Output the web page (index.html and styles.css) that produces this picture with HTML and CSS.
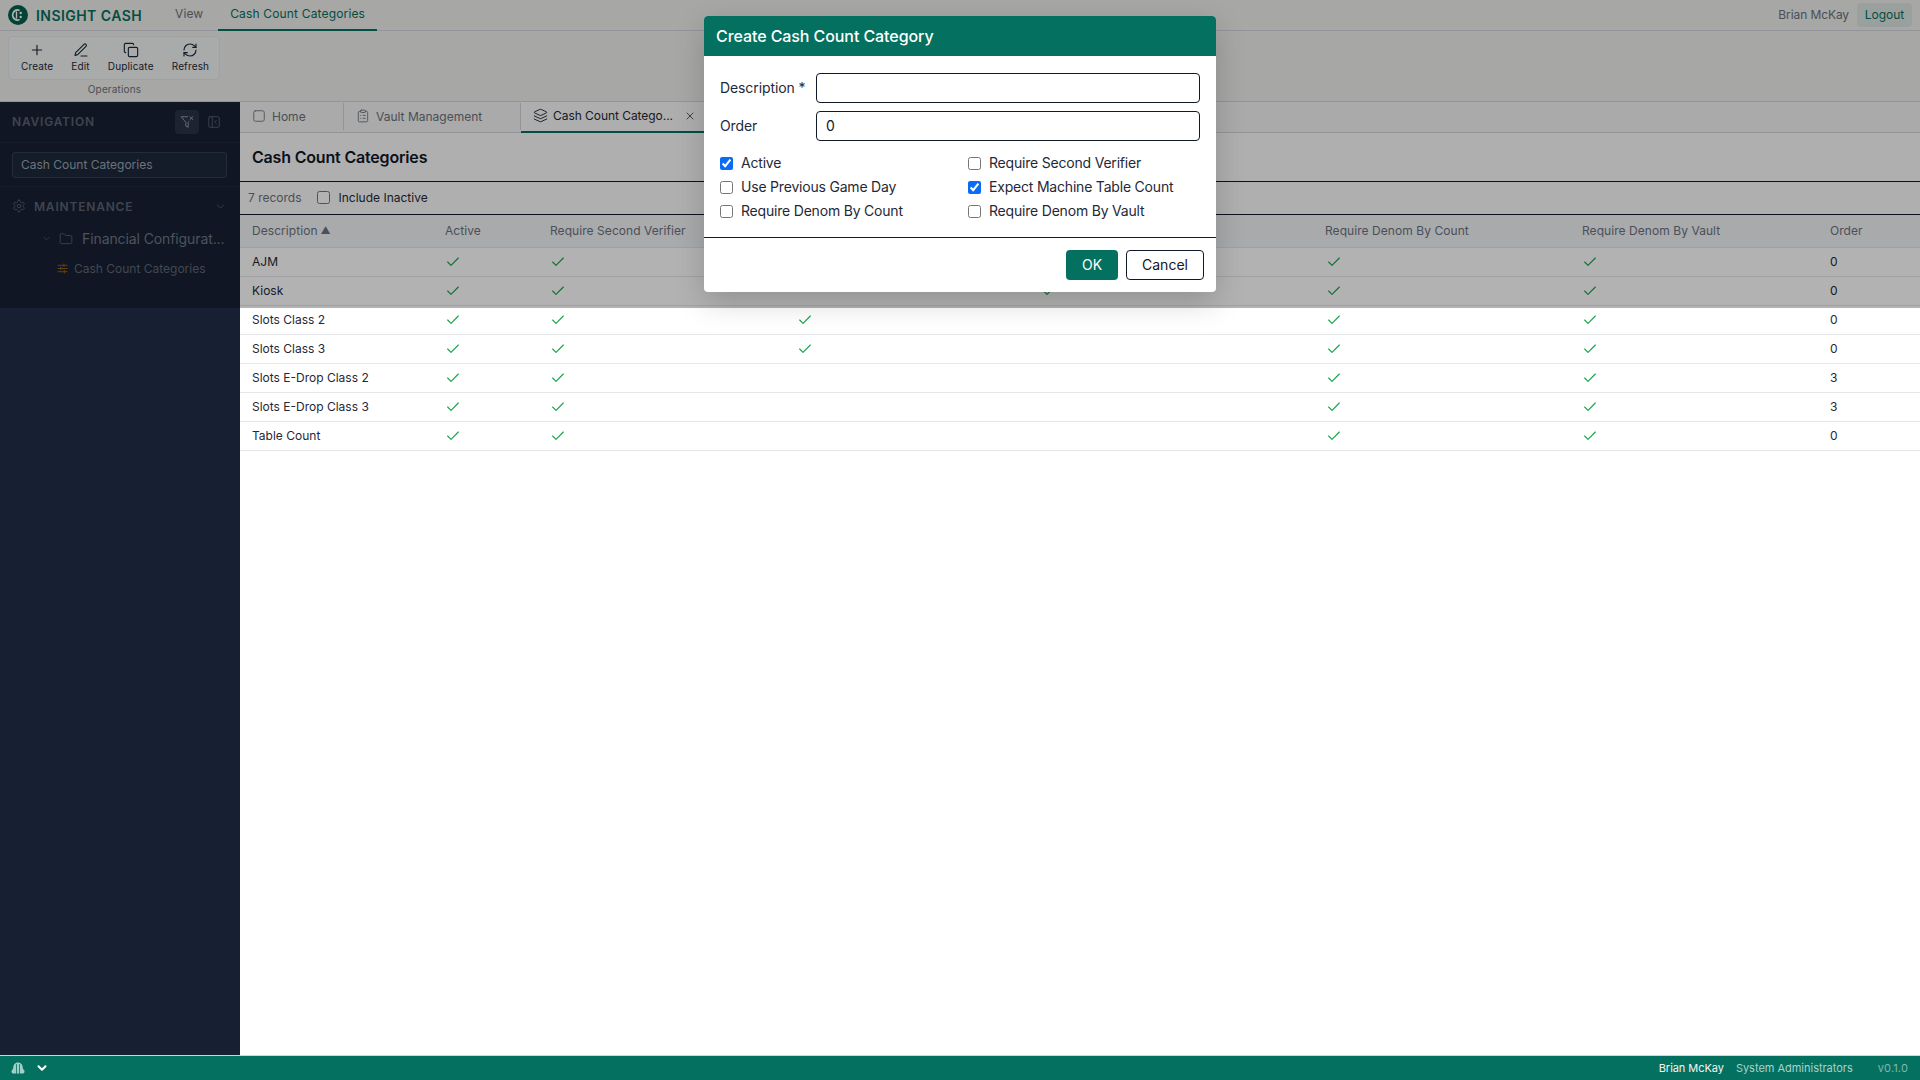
FILE: index.html
```html
<!DOCTYPE html>
<html lang="en">
<head>
<meta charset="utf-8">
<title>Insight Cash</title>
<link rel="stylesheet" href="styles.css">
</head>
<body>
<svg class="sprite" width="0" height="0" aria-hidden="true">
  <symbol id="i-check" viewBox="0 0 24 24"><path d="M20 6 9 17l-5-5"/></symbol>
  <symbol id="i-chev" viewBox="0 0 24 24"><path d="m6 9 6 6 6-6"/></symbol>
</svg>
<header class="topbar">
  <div class="brand">
    <svg class="logo" viewBox="0 0 20 20"><circle cx="10" cy="10" r="10" fill="#065f4c"/><path d="M11 5.2a5 5 0 1 0 0 9.600" fill="none" stroke="#fff" stroke-width="1.700"/><path d="M8.500 7v6" fill="none" stroke="#fff" stroke-width="1.400"/><circle cx="12.700" cy="8" r="1.200" fill="#fff"/><circle cx="12.700" cy="12" r="1.200" fill="#fff"/></svg>
    <span class="brand-name">INSIGHT CASH</span>
  </div>
  <nav class="menu">
    <a class="menu-item">View</a>
    <a class="menu-item is-active">Cash Count Categories</a>
  </nav>
  <div class="user">
    <span class="user-name">Brian McKay</span>
    <button class="logout">Logout</button>
  </div>
</header>

<section class="ribbon">
  <div class="ribbon-group">
    <div class="ribbon-box">
      <button class="rb"><svg class="ico16" viewBox="0 0 24 24"><path d="M5 12h14M12 5v14"/></svg><span>Create</span></button>
      <button class="rb"><svg class="ico16" viewBox="0 0 24 24"><path d="M12 21h9"/><path d="M16.5 3.5a2.12 2.12 0 0 1 3 3L7 19l-4 1 1-4Z"/></svg><span>Edit</span></button>
      <button class="rb"><svg class="ico16" viewBox="0 0 24 24"><rect x="8" y="8" width="14" height="14" rx="2"/><path d="M4 16c-1.1 0-2-.9-2-2V4c0-1.1.9-2 2-2h10c1.1 0 2 .9 2 2"/></svg><span>Duplicate</span></button>
      <button class="rb"><svg class="ico16" viewBox="0 0 24 24"><path d="M3 12a9 9 0 0 1 9-9 9.75 9.75 0 0 1 6.74 2.74L21 8"/><path d="M21 3v5h-5"/><path d="M21 12a9 9 0 0 1-9 9 9.75 9.75 0 0 1-6.74-2.74L3 16"/><path d="M8 16H3v5"/></svg><span>Refresh</span></button>
    </div>
    <div class="ribbon-caption">Operations</div>
  </div>
</section>

<div class="main">
  <aside class="sidebar">
    <div class="nav-head">
      <span class="nav-title">NAVIGATION</span>
      <button class="nav-filter"><svg viewBox="0 0 24 24"><path d="M13.013 3H2l8 9.46V19l4 2v-8.54l.9-1.055"/><path d="m22 3-5 5"/><path d="m17 3 5 5"/></svg></button>
      <svg class="nav-collapse" viewBox="0 0 24 24"><rect x="3" y="3" width="18" height="18" rx="2"/><path d="M9 3v18"/><path d="m16 15-3-3 3-3"/></svg>
    </div>
    <div class="nav-search"><div class="nav-input">Cash Count Categories</div></div>
    <div class="nav-section">
      <svg class="gear" viewBox="0 0 24 24"><path d="M12.22 2h-.44a2 2 0 0 0-2 2v.18a2 2 0 0 1-1 1.73l-.43.25a2 2 0 0 1-2 0l-.15-.08a2 2 0 0 0-2.73.73l-.22.38a2 2 0 0 0 .73 2.73l.15.1a2 2 0 0 1 1 1.72v.51a2 2 0 0 1-1 1.74l-.15.09a2 2 0 0 0-.73 2.73l.22.38a2 2 0 0 0 2.73.73l.15-.08a2 2 0 0 1 2 0l.43.25a2 2 0 0 1 1 1.73V20a2 2 0 0 0 2 2h.44a2 2 0 0 0 2-2v-.18a2 2 0 0 1 1-1.73l.43-.25a2 2 0 0 1 2 0l.15.08a2 2 0 0 0 2.73-.73l.22-.39a2 2 0 0 0-.73-2.73l-.15-.08a2 2 0 0 1-1-1.74v-.5a2 2 0 0 1 1-1.74l.15-.09a2 2 0 0 0 .73-2.73l-.22-.38a2 2 0 0 0-2.73-.73l-.15.08a2 2 0 0 1-2 0l-.43-.25a2 2 0 0 1-1-1.73V4a2 2 0 0 0-2-2z"/><circle cx="12" cy="12" r="3"/></svg>
      <span class="section-name">MAINTENANCE</span>
      <svg class="section-chev"><use href="#i-chev"/></svg>
    </div>
    <div class="nav-folder">
      <svg class="folder-chev"><use href="#i-chev"/></svg>
      <svg class="folder" viewBox="0 0 24 24"><path d="M20 20a2 2 0 0 0 2-2V8a2 2 0 0 0-2-2h-7.9a2 2 0 0 1-1.69-.9L9.6 3.9A2 2 0 0 0 7.93 3H4a2 2 0 0 0-2 2v13a2 2 0 0 0 2 2Z"/></svg>
      <span class="folder-name">Financial Configurat...</span>
    </div>
    <div class="nav-leaf">
      <svg class="leaf" viewBox="0 0 24 24"><path d="M2 5h20M2 12h20M2 19h20M15 2v6M8 9v6M16 16v6"/></svg>
      <span>Cash Count Categories</span>
    </div>
  </aside>

  <main class="content">
    <div class="tabs">
      <div class="tab tab-home"><svg class="ico14" viewBox="0 0 24 24"><rect x="3" y="3" width="18" height="18" rx="3"/></svg><span>Home</span></div>
      <div class="tab tab-vault"><svg class="ico14" viewBox="0 0 24 24"><rect x="8" y="2" width="8" height="4" rx="1"/><path d="M16 4h2a2 2 0 0 1 2 2v14a2 2 0 0 1-2 2H6a2 2 0 0 1-2-2V6a2 2 0 0 1 2-2h2"/><path d="M12 11h4M12 16h4M8 11h.01M8 16h.01"/></svg><span>Vault Management</span></div>
      <div class="tab tab-active"><svg class="ico14 layers" viewBox="0 0 24 24"><path d="m12.83 2.18a2 2 0 0 0-1.66 0L2.6 6.08a1 1 0 0 0 0 1.83l8.58 3.91a2 2 0 0 0 1.66 0l8.58-3.9a1 1 0 0 0 0-1.83Z"/><path d="m22 17.65-9.17 4.16a2 2 0 0 1-1.66 0L2 17.65"/><path d="m22 12.65-9.17 4.16a2 2 0 0 1-1.66 0L2 12.65"/></svg><span>Cash Count Catego...</span><svg class="tab-x" viewBox="0 0 24 24"><path d="M18 6 6 18M6 6l12 12"/></svg></div>
    </div>
    <h1 class="page-title">Cash Count Categories</h1>
    <div class="toolbar">
      <span class="records">7 records</span>
      <label class="inactive"><input type="checkbox"><span>Include Inactive</span></label>
    </div>
    <div class="grid">
      <div class="row head"><div>Description <span class="sort">▲</span></div><div>Active</div><div>Require Second Verifier</div><div>Use Previous Game Day</div><div>Expect Machine Table Count</div><div>Require Denom By Count</div><div>Require Denom By Vault</div><div>Order</div></div>
      <div class="row"><div>AJM</div><div><svg class="ok"><use href="#i-check"/></svg></div><div><svg class="ok"><use href="#i-check"/></svg></div><div></div><div><svg class="ok"><use href="#i-check"/></svg></div><div><svg class="ok"><use href="#i-check"/></svg></div><div><svg class="ok"><use href="#i-check"/></svg></div><div>0</div></div>
      <div class="row"><div>Kiosk</div><div><svg class="ok"><use href="#i-check"/></svg></div><div><svg class="ok"><use href="#i-check"/></svg></div><div></div><div><svg class="ok"><use href="#i-check"/></svg></div><div><svg class="ok"><use href="#i-check"/></svg></div><div><svg class="ok"><use href="#i-check"/></svg></div><div>0</div></div>
      <div class="row"><div>Slots Class 2</div><div><svg class="ok"><use href="#i-check"/></svg></div><div><svg class="ok"><use href="#i-check"/></svg></div><div><svg class="ok"><use href="#i-check"/></svg></div><div></div><div><svg class="ok"><use href="#i-check"/></svg></div><div><svg class="ok"><use href="#i-check"/></svg></div><div>0</div></div>
      <div class="row"><div>Slots Class 3</div><div><svg class="ok"><use href="#i-check"/></svg></div><div><svg class="ok"><use href="#i-check"/></svg></div><div><svg class="ok"><use href="#i-check"/></svg></div><div></div><div><svg class="ok"><use href="#i-check"/></svg></div><div><svg class="ok"><use href="#i-check"/></svg></div><div>0</div></div>
      <div class="row"><div>Slots E-Drop Class 2</div><div><svg class="ok"><use href="#i-check"/></svg></div><div><svg class="ok"><use href="#i-check"/></svg></div><div></div><div></div><div><svg class="ok"><use href="#i-check"/></svg></div><div><svg class="ok"><use href="#i-check"/></svg></div><div>3</div></div>
      <div class="row"><div>Slots E-Drop Class 3</div><div><svg class="ok"><use href="#i-check"/></svg></div><div><svg class="ok"><use href="#i-check"/></svg></div><div></div><div></div><div><svg class="ok"><use href="#i-check"/></svg></div><div><svg class="ok"><use href="#i-check"/></svg></div><div>3</div></div>
      <div class="row"><div>Table Count</div><div><svg class="ok"><use href="#i-check"/></svg></div><div><svg class="ok"><use href="#i-check"/></svg></div><div></div><div></div><div><svg class="ok"><use href="#i-check"/></svg></div><div><svg class="ok"><use href="#i-check"/></svg></div><div>0</div></div>
    </div>
  </main>
</div>

<footer class="status">
  <svg class="status-icon" viewBox="0 0 14 14"><path d="M2 12.500c-1-.2-1.500-1-1.500-2 0-1 .5-1.800 1.500-2.200C2.200 3.500 4 1.500 7 1.500s4.800 2 5 6.800c1 .4 1.500 1.200 1.500 2.200s-.5 1.800-1.500 2z"/><path class="status-icon-bar" d="M5.500 3.500v9M8.500 3.500v9"/></svg>
  <svg class="status-chev"><use href="#i-chev"/></svg>
  <span class="status-user">Brian McKay</span>
  <span class="status-role">System Administrators</span>
  <span class="status-ver">v0.1.0</span>
</footer>

<div class="backdrop"></div>

<div class="dialog" role="dialog">
  <div class="dialog-head">Create Cash Count Category</div>
  <div class="dialog-body">
    <div class="field"><label>Description *</label><div class="input"></div></div>
    <div class="field"><label>Order</label><div class="input">0</div></div>
    <div class="checks">
      <label><input type="checkbox" checked><span>Active</span></label>
      <label><input type="checkbox"><span>Require Second Verifier</span></label>
      <label><input type="checkbox"><span>Use Previous Game Day</span></label>
      <label><input type="checkbox" checked><span>Expect Machine Table Count</span></label>
      <label><input type="checkbox"><span>Require Denom By Count</span></label>
      <label><input type="checkbox"><span>Require Denom By Vault</span></label>
    </div>
  </div>
  <div class="dialog-foot">
    <button class="btn btn-ok">OK</button>
    <button class="btn btn-cancel">Cancel</button>
  </div>
</div>
</body>
</html>
```

FILE: styles.css
```css
* { box-sizing: border-box; }
html, body { height: 100%; }
body {
  margin: 0;
  height: 100vh;
  overflow: hidden;
  display: flex;
  flex-direction: column;
  position: relative;
  font-family: Inter, "Liberation Sans", sans-serif;
  font-size: 12px;
  color: #1f2937;
  background: #fff;
}
.sprite { position: absolute; }
button { font-family: inherit; border: 0; background: none; padding: 0; color: inherit; }
svg { fill: none; stroke: currentColor; stroke-width: 2; stroke-linecap: round; stroke-linejoin: round; flex: none; }

/* top bar */
.topbar {
  height: 31px;
  flex: none;
  display: flex;
  align-items: stretch;
  background: #efefec;
  border-bottom: 1px solid #d1d5db;
}
.brand { display: flex; align-items: center; padding-left: 8px; width: 163px; }
.logo { width: 20px; height: 20px; stroke: none; margin-right: 8px; }
.brand-name { font-size: 14px; font-weight: 600; letter-spacing: .45px; color: #04705f; }
.menu { display: flex; gap: 3px; }
.menu-item { padding: 0 12px 3px; display: flex; align-items: center; color: #6b7280; letter-spacing: .1px; border-bottom: 2px solid transparent; margin-bottom: -1px; }
.menu-item.is-active { color: #04705f; border-bottom-color: #04705f; letter-spacing: .16px; }
.user { margin-left: auto; display: flex; align-items: center; padding-right: 8px; }
.user-name { color: #6b7280; margin-right: 8px; letter-spacing: -.1px; padding-bottom: 1px; }
.logout { height: 24px; width: 55px; border-radius: 4px; background: #dde6e1; color: #04705f; font-size: 12px; padding-bottom: 2px; }

/* ribbon */
.ribbon {
  height: 71px;
  flex: none;
  background: #efefec;
  border-bottom: 1px solid #d1d5db;
  padding: 5px 8px 0;
}
.ribbon-group { width: 212px; }
.ribbon-box {
  height: 44px;
  display: flex;
  align-items: flex-start;
  padding: 5px 3px 0;
  border: 1px solid #e5e7eb;
  border-radius: 4px;
  background: #f3f4f4;
}
.rb { display: flex; flex-direction: column; align-items: center; padding: 0 9px; font-size: 10px; line-height: 12px; letter-spacing: .15px; color: #1f2937; }
.rb span { margin-top: 2px; }
.ico16 { width: 16px; height: 16px; stroke-width: 1.7; }
.ribbon-caption { text-align: center; font-size: 10px; line-height: 12px; margin-top: 3px; color: #6b7280; letter-spacing: .15px; padding-left: 1px; }

/* main */
.main { flex: 1; min-height: 0; display: flex; }

/* sidebar */
.sidebar { width: 240px; flex: none; background: #172033; color: #9ca3af; }
.nav-head { height: 41px; display: flex; align-items: center; padding: 0 19px 1px 12px; border-bottom: 1px solid #1f2a3e; }
.nav-title { font-size: 12px; font-weight: 600; letter-spacing: .8px; color: #5b6472; }
.nav-filter { margin-left: auto; width: 24px; height: 24px; border-radius: 4px; background: #2a3447; color: #a2a8b2; display: flex; align-items: center; justify-content: center; }
.nav-filter svg { width: 14px; height: 14px; stroke-width: 1.5; }
.nav-collapse { width: 14px; height: 14px; margin-left: 8px; stroke-width: 1.5; color: #5b6472; }
.nav-search { height: 44px; padding: 9px 13px 0 12px; border-bottom: 1px solid #1f2a3e; }
.nav-input { height: 26px; border: 1px solid #344054; border-radius: 3px; background: #1e293b; padding-left: 8px; line-height: 24px; color: #9ca3af; }
.nav-section { height: 38px; display: flex; align-items: center; padding: 0 13px 0 12px; }
.gear { width: 14px; height: 14px; stroke-width: 1.5; color: #5b6472; }
.section-name { margin-left: 8px; font-size: 12px; font-weight: 600; letter-spacing: .8px; color: #5b6472; }
.section-chev { width: 13px; height: 13px; margin-left: auto; color: #5b6472; stroke-width: 1.5; }
.nav-folder { height: 27px; display: flex; align-items: center; padding-left: 41px; }
.folder-chev { width: 11px; height: 11px; color: #5b6472; stroke-width: 1.5; }
.folder { width: 14px; height: 14px; margin-left: 7px; color: #5b6472; stroke-width: 1.5; }
.folder-name { margin-left: 9px; font-size: 14px; color: #6f7885; letter-spacing: -.1px; white-space: nowrap; }
.nav-leaf { height: 32px; display: flex; align-items: center; padding-left: 57px; color: #5f6876; }
.leaf { width: 11px; height: 11px; color: #a16207; margin-right: 6px; }

/* content */
.content { flex: 1; min-width: 0; display: flex; flex-direction: column; background: #fff; }
.tabs { height: 31px; flex: none; display: flex; background: #f3f4f2; border-bottom: 1px solid #d1d5db; }
.tab { height: 30px; display: flex; align-items: center; color: #6b7280; gap: 6px; padding-bottom: 2px; }
.tab-home { width: 104px; padding-left: 12px; position: relative; }
.tab-home::after, .tab-vault::after { content: ""; position: absolute; right: 0; top: 1px; bottom: 2px; width: 1px; background: #d1d5db; }
.tab-vault { width: 177px; padding-left: 12px; position: relative; }
.tab-active { width: 190px; padding: 0 0 2px 12px; gap: 5px; color: #1f2937; background: #f9fafb; border-bottom: 2px solid #04705f; height: 31px; letter-spacing: -.05px; }
.ico14 { width: 14px; height: 14px; stroke-width: 1.5; }
.layers { width: 15px; height: 15px; }
.tab-x { width: 12px; height: 12px; margin-left: 6px; stroke-width: 1.5; }
.page-title { margin: 0; height: 49px; flex: none; padding: 0 12px 1px; display: flex; align-items: center; font-size: 16px; font-weight: 600; letter-spacing: -.18px; color: #111827; background: #fbfbfb; border-bottom: 1px solid #111827; }
.toolbar { height: 33px; flex: none; display: flex; align-items: center; padding: 0 8px 1px; background: #fbfbfb; border-bottom: 1px solid #111827; }
.records { color: #6b7280; }
.inactive { display: flex; align-items: center; margin-left: 15px; gap: 9px; color: #1f2937; }
input[type=checkbox] { width: 13px; height: 13px; margin: 0; accent-color: #0a6cf5; flex: none; }

.grid { flex: none; }
.row {
  display: grid;
  grid-template-columns: 193px 105px 247px 244px 284px 257px 248px 102px;
  height: 29px;
  align-items: center;
  border-bottom: 1px solid #e5e7eb;
}
.row > div { padding: 0 0 1px 12px; white-space: nowrap; overflow: hidden; display: flex; align-items: center; height: 28px; }
.row > div:nth-child(6) .ok { margin-left: 1px; }
.row.head { height: 33px; background: #f3f4f6; color: #6b7280; letter-spacing: .06px; }
.row.head > div { height: 32px; padding-bottom: 2px; }
.sort { font-size: 10px; margin-left: 3px; }
.ok { width: 16px; height: 16px; color: #16a34a; stroke-width: 1.7; margin-top: 1px; }

/* status bar */
.status { height: 25px; flex: none; display: flex; align-items: center; padding: 0 12px 0 11px; background: #047060; border-top: 1px solid #cfd6d6; font-size: 11px; color: #fff; }
.status-icon { width: 14px; height: 14px; stroke: none; fill: #9fd0c6; }
.status-icon-bar { fill: none; stroke: #047060; stroke-width: .8; }
.status-chev { width: 14px; height: 14px; color: #fff; margin-left: 10px; stroke-width: 3.5; }
.status-user { margin-left: auto; color: #f1f5f4; letter-spacing: -.05px; }
.status-role { margin-left: 12px; color: #a7d3ca; letter-spacing: -.02px; }
.status-ver { margin-left: 25px; color: #7fb9ad; letter-spacing: .15px; }

/* modal */
.backdrop { position: absolute; left: 0; top: 0; right: 0; height: 308px; background: rgba(0,0,0,.3); }
.dialog {
  position: absolute;
  left: 704px;
  top: 16px;
  width: 512px;
  height: 276px;
  background: #fff;
  border-radius: 4px;
  box-shadow: 0 10px 30px rgba(0,0,0,.18);
  display: flex;
  flex-direction: column;
  font-size: 14px;
}
.dialog-head { height: 40px; flex: none; background: #047060; color: #fff; font-size: 16px; font-weight: 500; letter-spacing: -.08px; display: flex; align-items: center; padding-left: 12px; border-radius: 4px 4px 0 0; }
.dialog-body { flex: 1; padding: 17px 16px 0; border-bottom: 1px solid #111827; }
.field { display: grid; grid-template-columns: 96px 1fr; align-items: center; height: 30px; margin-bottom: 8px; color: #1f2937; letter-spacing: -.1px; }
.field label { padding-bottom: 1px; }
.input { height: 30px; border: 1px solid #111827; border-radius: 4px; padding-left: 9px; line-height: 27px; color: #111827; }
.checks { display: grid; grid-template-columns: 248px 1fr; margin-top: 10px; letter-spacing: -.2px; }
.checks label { display: flex; align-items: center; height: 24px; gap: 8px; color: #1f2937; }
.checks label span { padding-bottom: 1px; }
.dialog-foot { height: 54px; flex: none; display: flex; justify-content: flex-end; align-items: flex-start; gap: 8px; padding: 12px 12px 0; }
.btn { height: 30px; border-radius: 4px; font-size: 14px; padding-bottom: 2px; }
.btn-ok { width: 52px; background: #047060; color: #fff; }
.btn-cancel { width: 78px; background: #fff; border: 1px solid #111827; color: #111827; }
```
